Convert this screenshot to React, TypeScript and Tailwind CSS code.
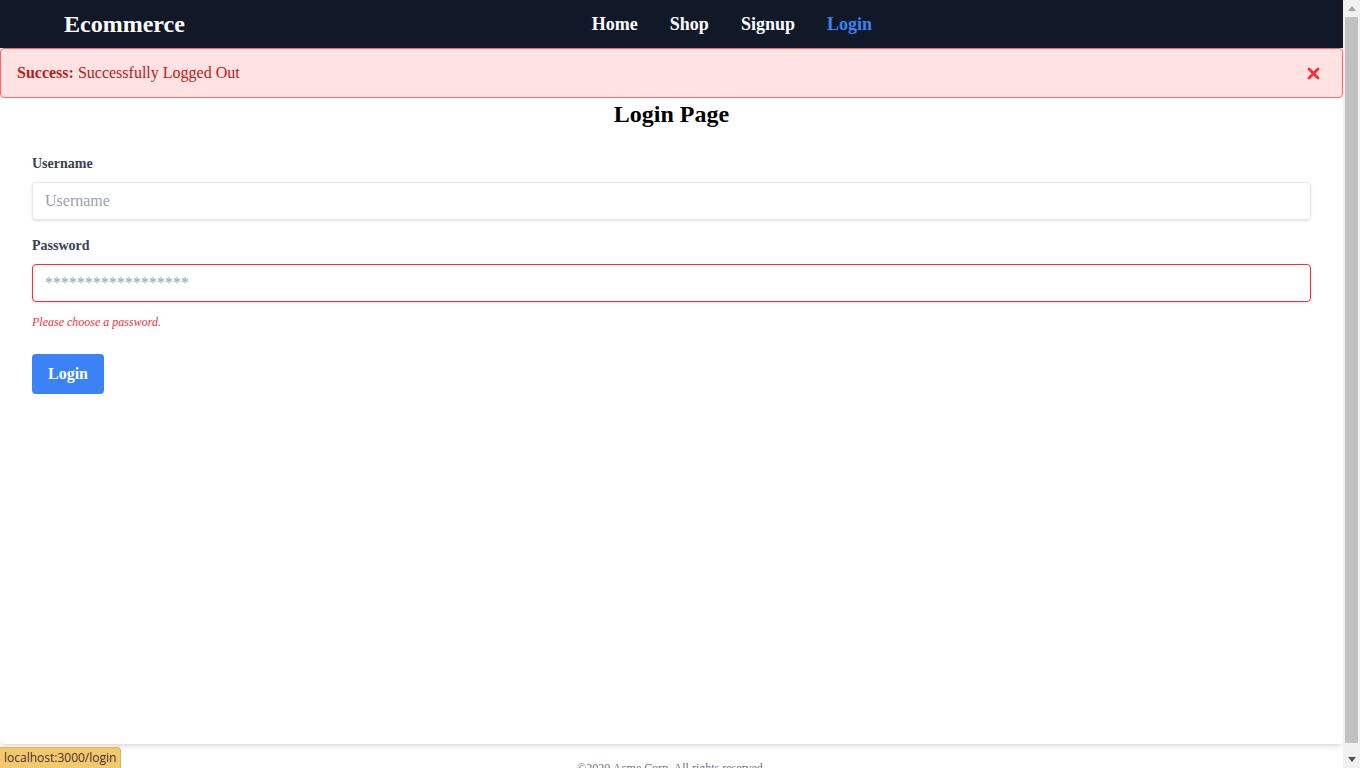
import { useState } from "react";

function Scrollbar() {
  return (
    <div className="flex w-[17px] shrink-0 flex-col bg-[#f1f1f1]">
      <div className="flex h-[17px] items-center justify-center">
        <svg width="8" height="5" viewBox="0 0 8 5">
          <path d="M4 0 L8 5 L0 5 Z" fill="#a3a3a3" />
        </svg>
      </div>
      <div className="flex-1 px-[2px]">
        <div className="h-[726px] bg-[#c1c1c1]" />
      </div>
      <div className="flex h-[17px] items-center justify-center">
        <svg width="8" height="5" viewBox="0 0 8 5">
          <path d="M0 0 L8 0 L4 5 Z" fill="#505050" />
        </svg>
      </div>
    </div>
  );
}

export default function App() {
  const [showAlert, setShowAlert] = useState(true);

  return (
    <div className="flex h-screen overflow-hidden bg-white font-['Liberation_Serif',serif]">
      <div className="min-w-0 flex-1">
        <nav className="flex h-12 items-center bg-[#111827] px-16">
          <a href="#" className="text-2xl font-bold text-white">
            Ecommerce
          </a>
          <div className="flex flex-1 justify-center gap-8 text-lg font-bold">
            <a href="#" className="text-white">Home</a>
            <a href="#" className="text-white">Shop</a>
            <a href="#" className="text-white">Signup</a>
            <a href="#" className="text-[#3b82f6]">Login</a>
          </div>
        </nav>

        <div className="rounded-b shadow-md">
          {showAlert && (
            <div className="flex items-center justify-between rounded border border-red-400 bg-red-100 px-4 py-3 text-[#b91c1c]">
              <span>
                <strong className="font-bold">Success:</strong> Successfully Logged Out
              </span>
              <button onClick={() => setShowAlert(false)} className="pr-1.5 text-red-500">
                <svg width="13" height="13" viewBox="0 0 13 13" fill="none">
                  <path d="M2 2 L11 11 M11 2 L2 11" stroke="currentColor" strokeWidth="2.8" strokeLinecap="round" />
                </svg>
              </button>
            </div>
          )}

          <h1 className="text-center text-2xl font-bold text-black">Login Page</h1>

          <form className="h-[614px] px-8 pt-6">
            <div className="mb-4">
              <label className="mb-2 block text-sm font-bold text-gray-700">Username</label>
              <input
                type="text"
                placeholder="Username"
                className="w-full appearance-none rounded border border-gray-200 px-3 py-2 leading-tight text-gray-700 shadow placeholder:text-gray-400 focus:outline-none"
              />
            </div>
            <div className="mb-6">
              <label className="mb-2 block text-sm font-bold text-gray-700">Password</label>
              <input
                type="password"
                placeholder="******************"
                className="mb-3 w-full appearance-none rounded border border-red-500 px-3 py-2 leading-tight text-gray-700 shadow placeholder:text-gray-400 focus:outline-none"
              />
              <p className="text-xs italic text-red-500">Please choose a password.</p>
            </div>
            <button type="button" className="rounded bg-[#3b82f6] px-4 py-2 font-bold text-white">
              Login
            </button>
          </form>
        </div>

        <footer className="py-4 text-center text-xs text-gray-500">
          ©2020 Acme Corp. All rights reserved.
        </footer>
      </div>

      <Scrollbar />

      <div className="fixed bottom-0 left-0 rounded-tr border-t border-r border-[#e0b458] bg-[#f2c96d] px-1 py-[2px] font-['Open_Sans',sans-serif] text-xs text-[#4a2a3a]">
        localhost:3000/login
      </div>
    </div>
  );
}
